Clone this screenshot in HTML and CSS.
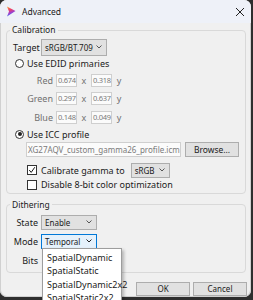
FILE: index.html
```html
<!DOCTYPE html>
<html lang="en">
<head>
    <meta charset="UTF-8">
    <meta name="viewport" content="width=device-width, initial-scale=1.0">
    <title>Advanced</title>
    <link rel="stylesheet" href="styles.css">
</head>
<body>

    <div class="window">
        <!-- Title bar -->
        <div class="titlebar">
            <svg class="app-icon" viewBox="0 0 10 11" width="10" height="11">
                <defs>
                    <linearGradient id="logo" x1="0" y1="0" x2="0.3" y2="1">
                        <stop offset="0" stop-color="#f9a825"/>
                        <stop offset="0.4" stop-color="#ec3d6c"/>
                        <stop offset="0.7" stop-color="#9b3fd0"/>
                        <stop offset="1" stop-color="#2c7cf2"/>
                    </linearGradient>
                </defs>
                <polygon points="1,0.5 9.5,5 1,10.5 3,5.5" fill="url(#logo)"/>
            </svg>
            <span class="title">Advanced</span>
            <svg class="close" viewBox="0 0 10 10" width="10" height="10">
                <path d="M1 1 L9 9 M9 1 L1 9" stroke="#222" stroke-width="1" fill="none"/>
            </svg>
        </div>

        <div class="content">
            <!-- Calibration -->
            <fieldset class="group calibration">
                <legend>Calibration</legend>

                <div class="row target-row">
                    <span class="label">Target</span>
                    <div class="combo combo-target">
                        <span>sRGB/BT.709</span>
                        <svg class="chev" viewBox="0 0 6 4"><path d="M0.5 0.5 L3 3 L5.5 0.5" stroke="#555" fill="none"/></svg>
                    </div>
                </div>

                <div class="row radio-row">
                    <span class="radio"></span>Use EDID primaries
                </div>

                <div class="row prim-row">
                    <span class="prim-label">Red</span>
                    <span class="field">0.674</span><span class="axis">x</span>
                    <span class="field">0.318</span><span class="axis">y</span>
                </div>
                <div class="row prim-row">
                    <span class="prim-label">Green</span>
                    <span class="field">0.297</span><span class="axis">x</span>
                    <span class="field">0.637</span><span class="axis">y</span>
                </div>
                <div class="row prim-row">
                    <span class="prim-label">Blue</span>
                    <span class="field">0.148</span><span class="axis">x</span>
                    <span class="field">0.049</span><span class="axis">y</span>
                </div>

                <div class="row radio-row">
                    <span class="radio checked"></span>Use ICC profile
                </div>

                <div class="row path-row">
                    <span class="field path">XG27AQV_custom_gamma26_profile.icm</span>
                    <span class="button browse">Browse...</span>
                </div>

                <div class="row check-row gamma-row">
                    <span class="check checked">
                        <svg viewBox="0 0 10 10"><path d="M1.5 5 L4 8 L8.5 1.5" stroke="#111" stroke-width="1.2" fill="none"/></svg>
                    </span>
                    <span>Calibrate gamma to</span>
                    <div class="combo combo-gamma">
                        <span>sRGB</span>
                        <svg class="chev" viewBox="0 0 6 4"><path d="M0.5 0.5 L3 3 L5.5 0.5" stroke="#555" fill="none"/></svg>
                    </div>
                </div>

                <div class="row check-row">
                    <span class="check"></span>
                    <span>Disable 8-bit color optimization</span>
                </div>
            </fieldset>

            <!-- Dithering -->
            <fieldset class="group dithering">
                <legend>Dithering</legend>

                <div class="row dither-row">
                    <span class="dither-label">State</span>
                    <div class="combo combo-dither">
                        <span>Enable</span>
                        <svg class="chev" viewBox="0 0 6 4"><path d="M0.5 0.5 L3 3 L5.5 0.5" stroke="#555" fill="none"/></svg>
                    </div>
                </div>

                <div class="row dither-row">
                    <span class="dither-label">Mode</span>
                    <div class="combo combo-dither focused">
                        <span>Temporal</span>
                        <svg class="chev" viewBox="0 0 6 4"><path d="M0.5 0.5 L3 3 L5.5 0.5" stroke="#222" fill="none"/></svg>
                        <!-- open dropdown list -->
                        <ul class="dropdown">
                            <li>SpatialDynamic</li>
                            <li>SpatialStatic</li>
                            <li>SpatialDynamic2x2</li>
                            <li>SpatialStatic2x2</li>
                        </ul>
                    </div>
                </div>

                <div class="row dither-row">
                    <span class="dither-label">Bits</span>
                </div>
            </fieldset>

            <!-- Dialog buttons -->
            <div class="buttons">
                <span class="button">OK</span>
                <span class="button">Cancel</span>
            </div>
        </div>
    </div>

</body>
</html>
```

FILE: styles.css
```css
* {
    box-sizing: border-box;
}

html, body {
    margin: 0;
    padding: 0;
}

/* Desktop behind the dialog */
body {
    width: 253px;
    height: 300px;
    overflow: hidden;
    background-color: #2e2e2e;
    font-family: "Noto Sans", "Liberation Sans", sans-serif;
    font-size: 9px;
    color: #1b1b1b;
}

/* Dialog Window */
.window {
    position: relative;
    width: 251px;
    height: 297px;
    background-color: #f0f0f0;
    border-radius: 7px;
    box-shadow: inset 0 0 0 1px #d0d0d0;
}

/* Title Bar */
.titlebar {
    height: 23px;
    display: flex;
    align-items: center;
    background-color: #eef1f8;
    border-radius: 7px 7px 0 0;
    padding: 0 6px 0 6px;
}
.title {
    margin-left: 6px;
    font-size: 8.5px;
    color: #1a1a1a;
}
.close {
    margin-left: auto;
}

/* Main Area */
.content {
    padding: 0 4px 0 6px;
}

/* Group Boxes */
.group {
    margin: 0;
    padding: 0 0 1px 0;
    width: 240px;
    border: 1px solid #d9d9d9;
    border-radius: 4px;
    min-width: 0;
}
.group legend {
    margin-left: 3px;
    padding: 0 2px;
    height: 14px;
    line-height: 14px;
    font-size: 8.5px;
    color: #1b1b1b;
}
.dithering {
    margin-top: 4px;
    padding-bottom: 2px;
}

/* Rows */
.row {
    display: flex;
    align-items: center;
}
.target-row {
    height: 18px;
    margin-top: 1px;
    padding-left: 6px;
}
.label {
    width: 28px;
}
.radio-row {
    height: 15px;
    padding-left: 8px;
}
.prim-row {
    height: 18.5px;
    color: #707070;
}
.prim-label {
    width: 46px;
    text-align: right;
    margin-right: 3px;
}
.axis {
    width: 14px;
    text-align: center;
}
.path-row {
    height: 16px;
    padding-left: 19px;
}
.check-row {
    height: 14px;
    padding-left: 20px;
}
.gamma-row {
    height: 15px;
    margin-top: 5px;
}

/* Radio buttons & checkboxes */
.radio {
    width: 9px;
    height: 9px;
    border: 1px solid #333;
    border-radius: 50%;
    background-color: #fff;
    margin-right: 3px;
    position: relative;
}
.radio.checked::after {
    content: "";
    position: absolute;
    left: 1.5px;
    top: 1.5px;
    width: 4px;
    height: 4px;
    border-radius: 50%;
    background-color: #222;
}
.check {
    width: 10px;
    height: 10px;
    border: 1px solid #333;
    background-color: #fff;
    margin-right: 4px;
    display: flex;
}
.check svg {
    width: 8px;
    height: 8px;
}

/* Text Fields */
.field {
    height: 13px;
    width: 21px;
    border: 1px solid #cfcfcf;
    background-color: #fbfbfb;
    color: #7a7a7a;
    font-size: 7.5px;
    letter-spacing: -0.3px;
    line-height: 11px;
    padding-left: 1px;
    white-space: nowrap;
    overflow: hidden;
}
.field.path {
    width: 155px;
    height: 15px;
    font-size: 8px;
    letter-spacing: 0;
    line-height: 13px;
    margin-right: 4px;
}

/* Combo Boxes */
.combo {
    position: relative;
    display: flex;
    align-items: center;
    justify-content: space-between;
    height: 15px;
    padding: 0 4px 0 3px;
    background-color: #e1e1e1;
    border: 1px solid #adadad;
    font-size: 8px;
    color: #1b1b1b;
}
.combo.focused {
    background-color: #e5f1fb;
    border-color: #0078d7;
}
.chev {
    width: 6px;
    height: 4px;
}
.combo-target {
    width: 66px;
    height: 17px;
}
.combo-gamma {
    width: 39px;
    margin-left: 6px;
}
.dither-row {
    height: 19px;
}
.dither-row:first-of-type {
    margin-top: 1px;
}
.dither-label {
    width: 31px;
    text-align: right;
    margin-right: 3px;
}
.combo-dither {
    width: 56px;
}

/* Open Dropdown List */
.dropdown {
    position: absolute;
    top: 100%;
    left: 0;
    width: 80px;
    margin: 0;
    padding: 2px 0 0 0;
    list-style: none;
    background-color: #fff;
    border: 1px solid #9d9d9d;
    box-shadow: 2px 2px 3px rgba(0, 0, 0, 0.25);
    font-size: 9px;
    z-index: 5;
}
.dropdown li {
    height: 13.5px;
    line-height: 13.5px;
    padding-left: 4px;
    white-space: nowrap;
}

/* Buttons */
.button {
    display: flex;
    align-items: center;
    justify-content: center;
    height: 15px;
    background-color: #e1e1e1;
    border: 1px solid #adadad;
    font-size: 8.5px;
    color: #1b1b1b;
}
.browse {
    width: 54px;
}
.buttons {
    display: flex;
    justify-content: flex-end;
    gap: 3px;
    margin-top: 9px;
}
.buttons .button {
    width: 54px;
    height: 14px;
    font-size: 8px;
}
```
